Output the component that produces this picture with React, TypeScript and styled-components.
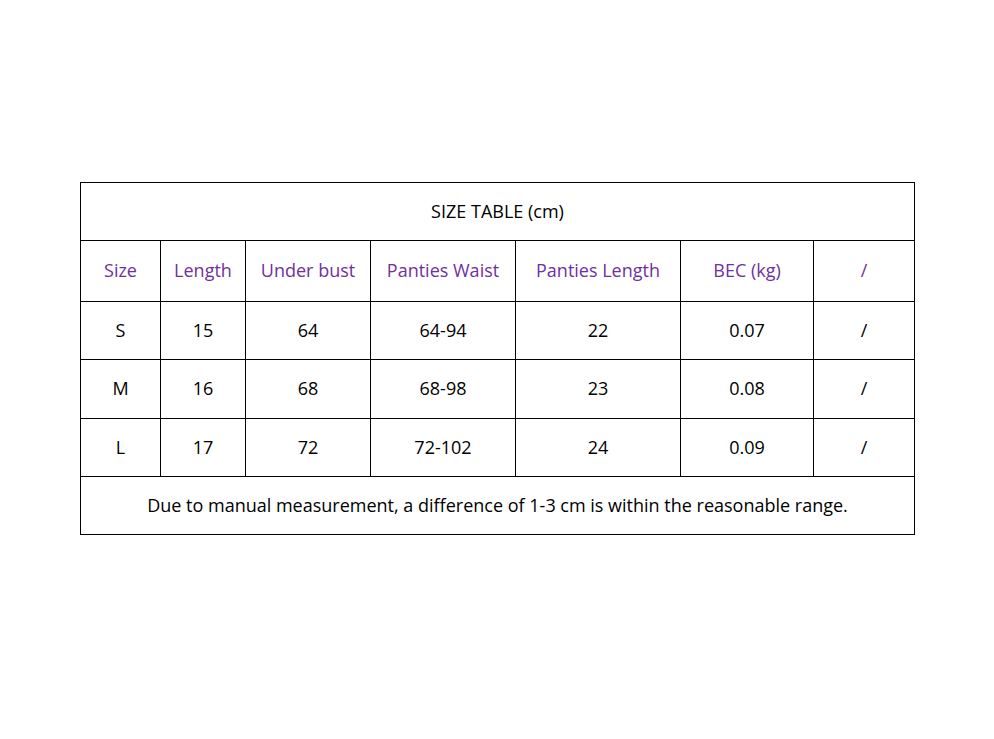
import React from 'react';
import styled, {createGlobalStyle} from 'styled-components';

const GlobalStyle = createGlobalStyle`
  html, body {
    margin: 0;
    padding: 0;
    background: #fff;
  }
  body {
    font-family: 'Open Sans', 'Noto Sans', sans-serif;
  }
`;

const Page = styled.div`
  width: 994px;
  height: 739px;
  padding-top: 182px;
  padding-left: 80px;
  box-sizing: border-box;
`;

const Table = styled.table`
  border-collapse: collapse;
  table-layout: fixed;
  width: 834px;
  font-size: 18px;
  color: #000;
`;

const Cell = styled.td<{$head?: boolean}>`
  border: 1px solid #000;
  padding: 0 0 2px;
  text-align: center;
  vertical-align: middle;
  color: ${({$head}) => ($head ? '#7030a0' : '#000')};
  white-space: nowrap;
`;

const Row = styled.tr<{$h: number}>`
  height: ${({$h}) => $h}px;
`;

const widths = [80, 85, 125, 145, 165, 133, 101];

const headers = ['Size', 'Length', 'Under bust', 'Panties Waist', 'Panties Length', 'BEC (kg)', '/'];

const rows = [
  {h: 58, cells: ['S', '15', '64', '64-94', '22', '0.07', '/']},
  {h: 59, cells: ['M', '16', '68', '68-98', '23', '0.08', '/']},
  {h: 58, cells: ['L', '17', '72', '72-102', '24', '0.09', '/']},
];

export default function App() {
  return (
    <Page>
      <GlobalStyle />
      <Table>
        <colgroup>
          {widths.map((w, i) => (
            <col key={i} style={{width: w}} />
          ))}
        </colgroup>
        <tbody>
          <Row $h={58}>
            <Cell colSpan={7}>SIZE TABLE (cm)</Cell>
          </Row>
          <Row $h={61}>
            {headers.map((t) => (
              <Cell key={t} $head>
                {t}
              </Cell>
            ))}
          </Row>
          {rows.map((r) => (
            <Row key={r.cells[0]} $h={r.h}>
              {r.cells.map((c, i) => (
                <Cell key={i}>{c}</Cell>
              ))}
            </Row>
          ))}
          <Row $h={58}>
            <Cell colSpan={7}>
              Due to manual measurement, a difference of 1-3 cm is within the reasonable range.
            </Cell>
          </Row>
        </tbody>
      </Table>
    </Page>
  );
}
